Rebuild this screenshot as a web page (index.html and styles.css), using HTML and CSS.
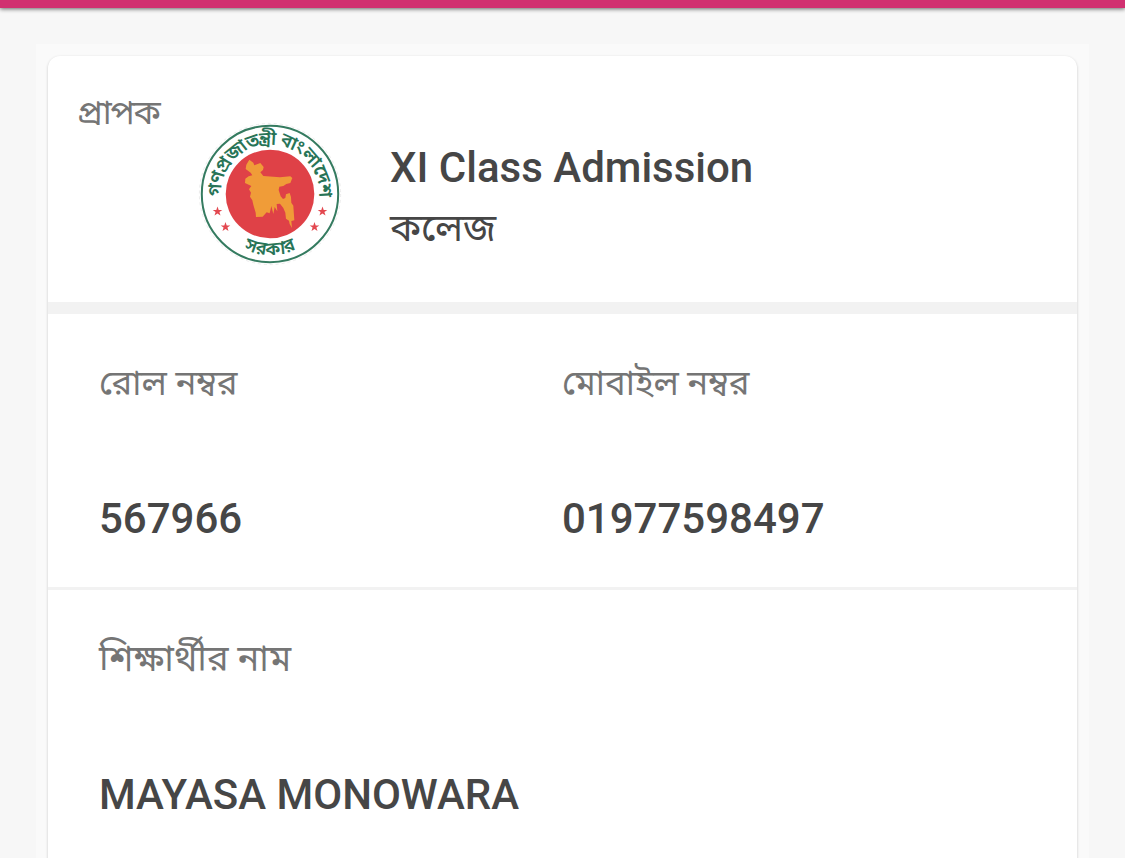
FILE: index.html
```html
<!DOCTYPE html>
<html lang="bn"><head><meta charset="utf-8"><title>Payment</title><link rel="stylesheet" href="styles.css"></head>
<body>
<div class="topbar"></div>
<main class="sheet"><section class="card">
<header class="recipient"><span class="label recipient-label">প্রাপক</span>
<svg class="seal" viewBox="0 0 144 144">
<defs><path id="top" d="M27.4 92A49 49 0 1 1 116.6 92"/><path id="bottom" d="M11 72A61 61 0 0 0 133 72"/>
<path id="star" d="M0-5L1.2-1.6H4.8L1.9.6L3 4.1L0 2L-3 4.1L-1.9.6L-4.8-1.6H-1.2Z"/></defs>
<circle cx="72" cy="72" r="70.6" fill="none" stroke="#ececec" stroke-width="1" stroke-dasharray="3 3"/>
<circle cx="72" cy="72" r="68.2" fill="#fff" stroke="#357b60" stroke-width="2"/>
<circle cx="72" cy="72" r="44.3" fill="#df4147"/>
<path transform="translate(-8 -7) scale(.3333)" fill="#f09c38" d="M178 134L190 143L193 151L211 144L221 156L219 165L211 172L220 183L270 187L301 184L307 189L301 204L289 207L280 213L268 215L266 225L272 244L279 252L286 249L288 238L299 234L303 246L304 263L310 272L313 316L304 318L306 339L299 327L297 317L288 311L286 293L280 279L270 266L260 267L262 289L254 276L250 297L244 273L239 295L230 292L218 305L198 306L197 293L190 269L187 256L180 245L183 233L177 223L184 213L165 204L166 191L176 184L187 181L182 173L167 162L169 149Z"/>
<g fill="#e34850"><use href="#star" x="19.5" y="89.5"/><use href="#star" x="27.5" y="105"/><use href="#star" x="124.5" y="89.5"/><use href="#star" x="116.5" y="105"/></g>
<text class="seal-text seal-top"><textPath href="#top" startOffset="50%">গণপ্রজাতন্ত্রী বাংলাদেশ</textPath></text>
<text class="seal-text"><textPath href="#bottom" startOffset="50%">সরকার</textPath></text>
</svg>
<div class="who"><div class="name">XI Class Admission</div><div class="kind">কলেজ</div></div></header>
<div class="row two"><div class="field"><span class="label">রোল নম্বর</span><span class="value">567966</span></div><div class="field"><span class="label">মোবাইল নম্বর</span><span class="value">01977598497</span></div></div>
<div class="row"><div class="field"><span class="label student">শিক্ষার্থীর নাম</span><span class="value">MAYASA MONOWARA</span></div></div>
</section></main>
</body></html>
```
FILE: styles.css
```css
*{box-sizing:border-box}
body{margin:0;height:858px;overflow:hidden;background:#f7f7f7;font-family:Roboto,"Noto Sans Bengali","Noto Sans",sans-serif;color:#464646}
.topbar{height:8px;background:#d13070;box-shadow:0 1px 4px #0009}
.sheet{margin:36px 36px 0;padding:12px 12px 0;background:#fafafa;height:814px}
.card{height:830px;background:#fff;border-radius:12px;box-shadow:0 1px 3px #0003}
.recipient{height:258px;border-bottom:12px solid #f2f2f2;display:flex}
.label{font-size:34.7px;line-height:48px;color:#757575}
.recipient-label{width:120px;padding:33px 0 0 29px;white-space:nowrap;font-size:33.8px;letter-spacing:-1.2px}
.student{font-size:36.2px}
.seal{width:144px;height:144px;margin:66px 0 0 30px}
.seal-text{font-size:18.5px;font-weight:600;fill:#287457;text-anchor:middle}
.seal-top{font-size:18.8px;letter-spacing:-1px}
.who{margin:83px 0 0 48px}
.name{font-size:42px;font-weight:500;line-height:58px}
.kind{font-size:38.5px;line-height:62px}
.row{height:276px;border-bottom:3px solid #f2f2f2;padding:45px 51px 0;display:grid;align-content:start}
.two{grid-template-columns:463px 1fr}
.field{display:flex;flex-direction:column;gap:83px}
.value{font-size:42px;line-height:58px;font-weight:500}
```
